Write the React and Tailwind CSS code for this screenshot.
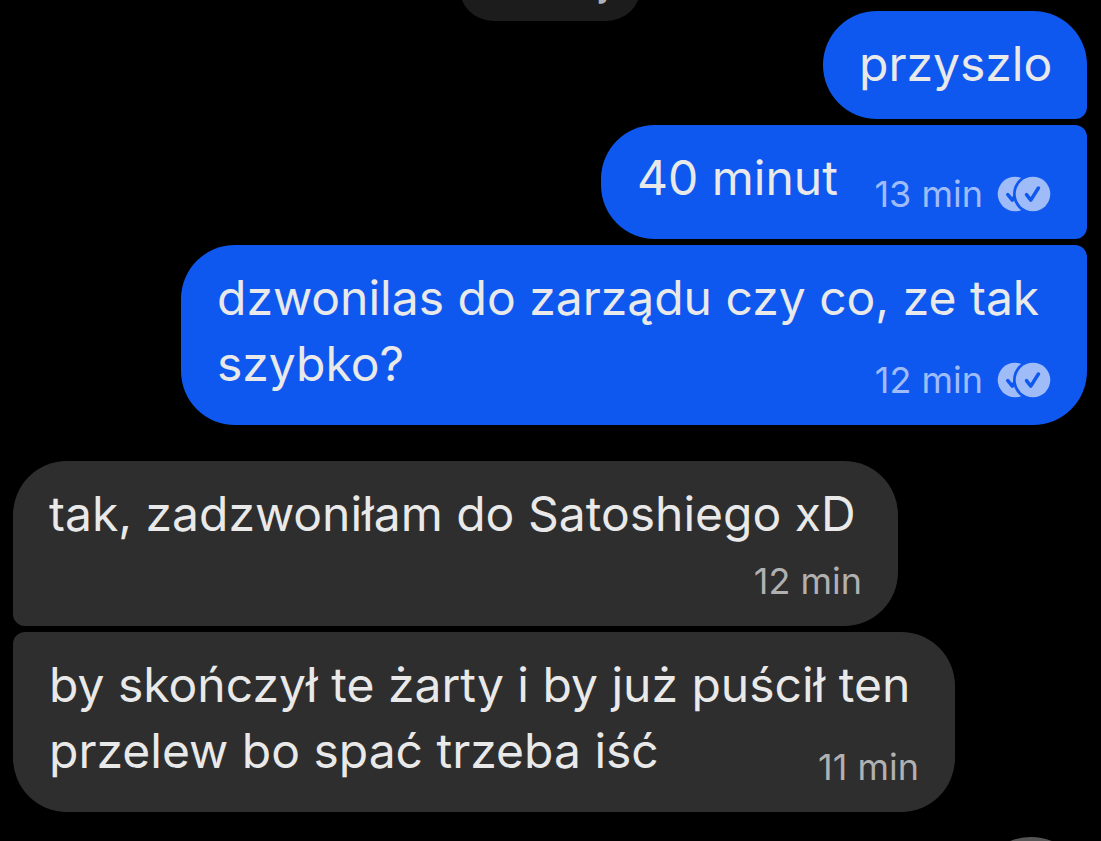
import clsx from "clsx";

const sent = [
  { id: 1, lines: ["przyszlo"], shape: "rounded-[54px] rounded-br-xl", width: "w-[264px]" },
  { id: 2, lines: ["40 minut"], time: "13 min", shape: "rounded-[54px] rounded-r-xl", width: "w-[486px]" },
  {
    id: 3,
    lines: ["dzwonilas do zarządu czy co, ze tak", "szybko?"],
    time: "12 min",
    shape: "rounded-[54px] rounded-tr-xl",
    width: "w-[906px]",
  },
];

const received = [
  {
    id: 4,
    lines: ["tak, zadzwoniłam do Satoshiego xD"],
    time: "12 min",
    timeBelow: true,
    shape: "rounded-[54px] rounded-bl-xl",
    width: "w-[885px]",
  },
  {
    id: 5,
    lines: ["by skończył te żarty i by już puścił ten", "przelew bo spać trzeba iść"],
    time: "11 min",
    shape: "rounded-[54px] rounded-tl-xl",
    width: "w-[942px]",
  },
];

function ReadReceipt() {
  return (
    <svg viewBox="0 0 54 36" className="h-9 w-[54px]" role="img" aria-label="Przeczytano">
      <mask id="back-check">
        <rect width="54" height="36" fill="white" />
        <path d="M10.8 18.6l4.5 5.5 7.5-12" fill="none" stroke="black" strokeWidth="3.5" strokeLinecap="round" strokeLinejoin="round" />
        <circle cx="36" cy="18" r="20" fill="black" />
      </mask>
      <mask id="front-check">
        <rect width="54" height="36" fill="white" />
        <path d="M29.5 18.6l4.3 5.5 7.6-12.1" fill="none" stroke="black" strokeWidth="3.5" strokeLinecap="round" strokeLinejoin="round" />
      </mask>
      <circle cx="18" cy="18" r="17.3" fill="currentColor" mask="url(#back-check)" />
      <circle cx="36" cy="18" r="17.3" fill="currentColor" mask="url(#front-check)" />
    </svg>
  );
}

function Bubble({ message, own }) {
  const { lines, time, timeBelow, shape, width } = message;

  return (
    <article
      className={clsx(
        "flow-root max-w-full px-9 pt-5 pb-[22px] text-[#e9e9e9]",
        own ? "bg-[#0f58ef]" : "bg-[#2e2e2e]",
        shape,
        width
      )}
    >
      <p className="text-[48px] leading-[66px]">
        {lines.map((line, i) => (
          <span key={line}>
            {i > 0 && <br />}
            {line}
          </span>
        ))}
        {time && (
          <span
            className={clsx(
              "float-right flex items-center gap-[14px] text-[36px] leading-[46px]",
              timeBelow ? "clear-both mt-[11px]" : "mt-[26px]",
              own ? "text-[#9fbcf9]" : "text-[#b1b1b1]"
            )}
          >
            <time>{time}</time>
            {own && <ReadReceipt />}
          </span>
        )}
      </p>
    </article>
  );
}

export default function App() {
  return (
    <main className="flex h-screen flex-col overflow-hidden bg-black pr-[14px] pl-[13px] font-['Inter',sans-serif]">
      <div className="-mt-12 mb-[-10px] flex shrink-0 justify-center">
        <span className="rounded-full bg-[#1c1c1c] px-8 pt-[10px] pb-[17px] text-[37px] leading-[42px] font-semibold text-[#b0b0b8]">
          Dzisiaj
        </span>
      </div>

      <section className="flex shrink-0 flex-col items-end gap-[6px]">
        {sent.map((message) => (
          <Bubble key={message.id} message={message} own />
        ))}
      </section>

      <section className="mt-9 flex shrink-0 flex-col items-start gap-[6px]">
        {received.map((message) => (
          <Bubble key={message.id} message={message} />
        ))}
      </section>

      <button
        type="button"
        aria-label="Przewiń na dół"
        className="mt-[25px] size-28 shrink-0 self-end rounded-full bg-[#555555]"
      />
    </main>
  );
}
